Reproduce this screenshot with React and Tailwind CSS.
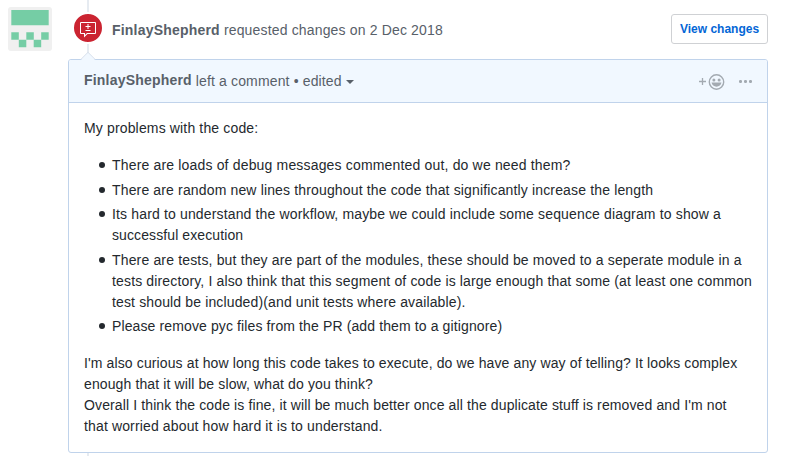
const CARD_FONT = "font-['Liberation_Sans',Arial,sans-serif]";

function Avatar() {
  return (
    <svg className="mt-[7px] ml-2 h-11 w-11 shrink-0 rounded-[3px] bg-[#f0f0f0]" viewBox="0 0 44 44" fill="#75cda5">
      <path d="M3.3 3h37.4v15.2H3.3z" />
      <path d="M3.3 25.3h7.5v7.5H3.3zM18.3 25.3h7.5v7.5h-7.5zM33.2 25.3h7.5v7.5h-7.5z" />
      <path d="M10.8 32.8h7.5v7.5h-7.5zM25.7 32.8h7.5v7.5h-7.5z" />
    </svg>
  );
}

function RequestChangesIcon() {
  return (
    <svg className="mt-[3px]" width="16" height="16" viewBox="0 0 16 16" fill="#fff">
      <path
        fillRule="evenodd"
        d="M0 1a1 1 0 011-1h14a1 1 0 011 1v10a1 1 0 01-1 1H7.500L4 15.500V12H1a1 1 0 01-1-1V1zm1 0v10h4v2l2-2h8V1H1zm7.500 3h2v1h-2v2h-1V5h-2V4h2V2h1v2zm2 5h-5V8h5v1z"
      />
    </svg>
  );
}

function Event() {
  return (
    <div className="flex h-[59px]">
      <div className="flex w-10 flex-col items-center">
        <div className="h-3 w-[2px] bg-[#e6ebf1]" />
        <div className="flex h-8 w-8 items-center justify-center rounded-full border-2 border-white bg-[#cb2431]">
          <RequestChangesIcon />
        </div>
        <div className="w-[2px] flex-1 bg-[#e6ebf1]" />
      </div>
      <div className="ml-1 flex-1 pt-5 tracking-[0.16px] text-[#586069]">
        <strong className="tracking-[0.2px]">FinlayShepherd</strong> requested changes on 2 Dec 2018
      </div>
      <button className="mt-[14px] h-[30px] w-[97px] rounded-[3px] border border-[#cfd1d4] bg-white text-[12px] leading-5 font-bold text-[#0366d6]">
        View changes
      </button>
    </div>
  );
}

function CardHeader() {
  return (
    <div className="relative flex h-[43px] items-center rounded-t-[2px] border-b border-[#c0d3eb] bg-[#f1f8ff] px-[15px] text-[#586069]">
      <svg className="absolute -top-[9px] left-[11px]" width="16" height="10" viewBox="0 0 16 10">
        <path d="M0 10L8 1.500L16 10z" fill="#f1f8ff" />
        <path d="M.8 8.500L8 1.300L15.200 8.500" fill="none" stroke="#d5deeb" />
      </svg>
      <strong className="relative -top-px tracking-[0.2px]">FinlayShepherd</strong>
      <span className="ml-1 tracking-[0.14px]">left a comment • edited</span>
      <svg className="mt-px ml-1" width="8" height="4" viewBox="0 0 8 4" fill="#586069">
        <path d="M0 0h8L4 4z" />
      </svg>
      <svg className="ml-auto" width="7" height="7" viewBox="0 0 7 7" stroke="#a3aab1" strokeWidth="1.3">
        <path d="M3.500 0v7M0 3.500h7" />
      </svg>
      <svg className="mt-px ml-[2px]" width="17" height="16" viewBox="0 0 17 16" fill="#a3aab1">
        <circle cx="8.500" cy="8" r="7.2" fill="none" stroke="#a3aab1" strokeWidth="1.4" />
        <circle cx="5.900" cy="6" r="1.5" />
        <circle cx="11.100" cy="6" r="1.5" />
        <path d="M3.500 8.600h10c-.5 2.500-2.500 4.100-5 4.100S4 11.100 3.500 8.600z" />
      </svg>
      <svg className="ml-[14px]" width="13" height="3" viewBox="0 0 13 3" fill="#a3aab1">
        <rect width="3" height="3" rx="1.2" />
        <rect x="5" width="3" height="3" rx="1.2" />
        <rect x="10" width="3" height="3" rx="1.2" />
      </svg>
    </div>
  );
}

function Item({ children }) {
  return (
    <li className="flex">
      <span className="mt-[7px] mr-[7px] ml-[15px] h-[6px] w-[6px] shrink-0 rounded-full bg-[#24292e]" />
      <span>{children}</span>
    </li>
  );
}

function Comment() {
  return (
    <div className="h-[394px] rounded-[3px] border border-[#c0d3eb] bg-white">
      <CardHeader />
      <div className="p-[15px] tracking-[0.15px] whitespace-nowrap text-[#24292e]">
        <p className="mb-4">My problems with the code:</p>
        <ul className="mb-4 flex flex-col gap-[3.5px]">
          <Item>
            <span className="tracking-[0.17px]">There are loads of debug messages commented out, do we need them?</span>
          </Item>
          <Item>There are random new lines throughout the code that significantly increase the length</Item>
          <Item>
            Its hard to understand the workflow, maybe we could include some sequence diagram to show a
            <br />
            <span className="tracking-[0.1px]">successful execution</span>
          </Item>
          <Item>
            <span className="tracking-[0.16px]">
              There are tests, but they are part of the modules, these should be moved to a seperate module in a
            </span>
            <br />
            tests directory, I also think that this segment of code is large enough that some (at least one common
            <br />
            <span className="tracking-[0.14px]">test should be included)(and unit tests where available).</span>
          </Item>
          <Item>
            <span className="tracking-[0.12px]">Please remove pyc files from the PR (add them to a gitignore)</span>
          </Item>
        </ul>
        <p className="tracking-[0.12px]">
          I'm also curious at how long this code takes to execute, do we have any way of telling? It looks complex
          <br />
          enough that it will be slow, what do you think?
          <br />
          Overall I think the code is fine, it will be much better once all the duplicate stuff is removed and I'm not
          <br />
          <span className="tracking-[0.14px]">that worried about how hard it is to understand.</span>
        </p>
      </div>
    </div>
  );
}

export default function App() {
  return (
    <div className={`flex h-[456px] w-[787px] overflow-hidden bg-white text-[14px] leading-[21px] ${CARD_FONT}`}>
      <Avatar />
      <div className="ml-4 w-[700px]">
        <Event />
        <Comment />
        <div className="ml-[19px] h-[3px] w-[2px] bg-[#e6ebf1]" />
      </div>
    </div>
  );
}
